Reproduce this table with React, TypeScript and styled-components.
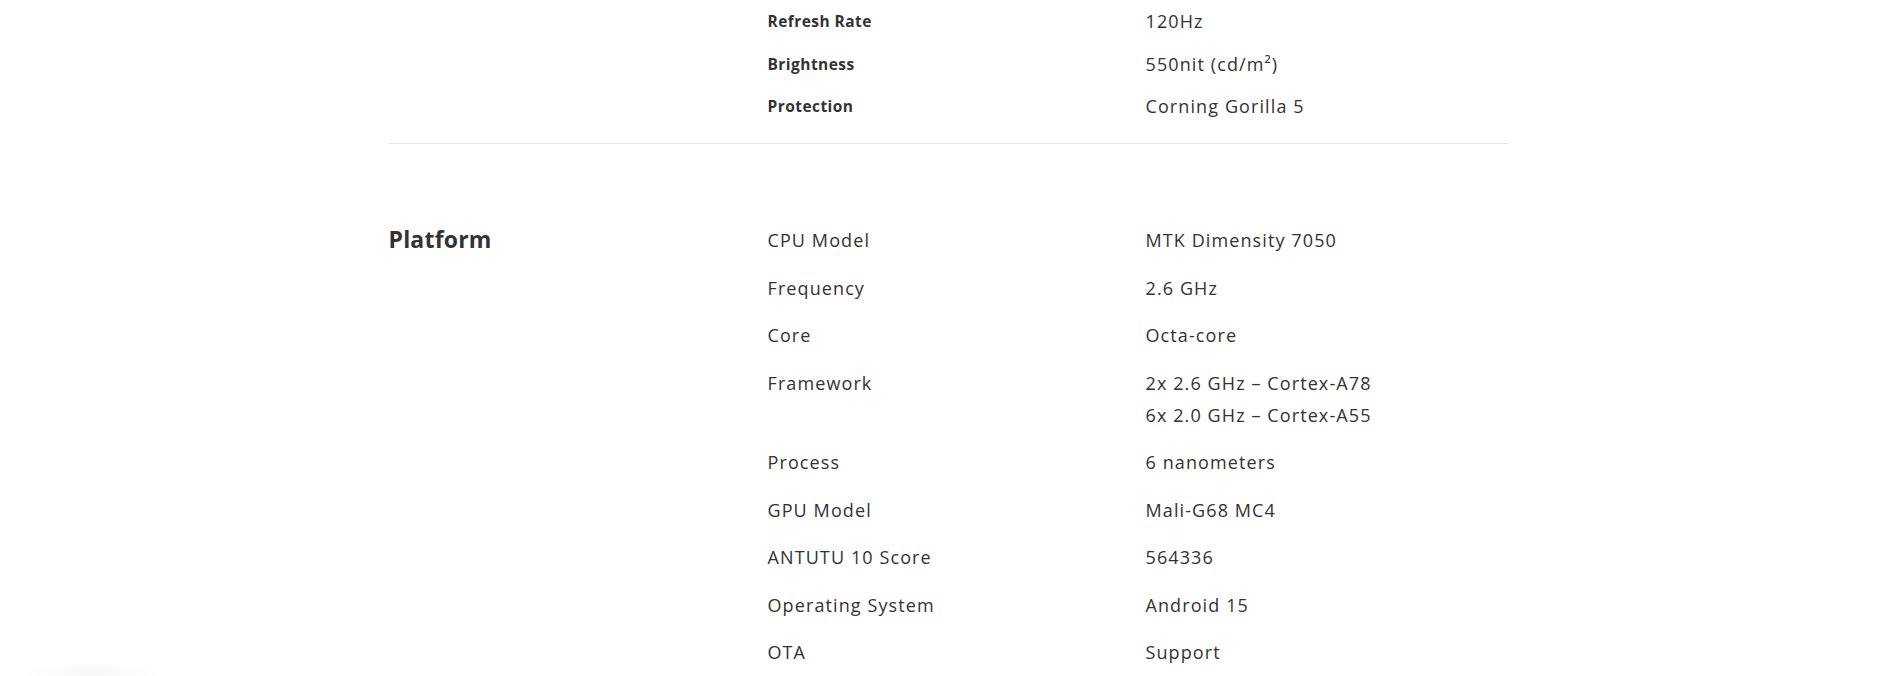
import React from "react";
import styled, { createGlobalStyle } from "styled-components";

const GlobalStyle = createGlobalStyle`
  html, body {
    margin: 0;
    padding: 0;
    background: #ffffff;
  }
  body {
    font-family: "Open Sans", "Liberation Sans", sans-serif;
    color: #333333;
    overflow: hidden;
  }
`;

const Page = styled.main`
  width: 1120px;
  margin: 0 auto;
`;

const Section = styled.section<{ $divided?: boolean; $padTop: number; $padBottom: number }>`
  display: grid;
  grid-template-columns: 379px 1fr;
  padding-top: ${(p) => p.$padTop}px;
  padding-bottom: ${(p) => p.$padBottom}px;
  border-bottom: ${(p) => (p.$divided ? "1px solid #e6e6e6" : "none")};
`;

const SectionTitle = styled.h2`
  margin: 0;
  padding-top: 8px;
  font-family: "Open Sans", "Liberation Sans", sans-serif;
  font-size: 23px;
  font-weight: 700;
  line-height: 29px;
  letter-spacing: 0.2px;
  color: #333333;
`;

const SpecList = styled.dl`
  margin: 0;
  display: flex;
  flex-direction: column;
`;

const SpecRow = styled.div<{ $compact?: boolean }>`
  display: grid;
  grid-template-columns: 378px 1fr;
  padding: ${(p) => (p.$compact ? "7px 0" : "7.75px 0")};
`;

const Label = styled.dt<{ $strong?: boolean }>`
  margin: 0;
  font-size: ${(p) => (p.$strong ? "15.5px" : "18px")};
  font-weight: ${(p) => (p.$strong ? 700 : 400)};
  line-height: ${(p) => (p.$strong ? "28.5px" : "32px")};
  letter-spacing: ${(p) => (p.$strong ? "0.45px" : "1.1px")};
  color: #333333;
`;

const Value = styled.dd<{ $compact?: boolean }>`
  margin: 0;
  font-size: 18px;
  font-weight: 400;
  line-height: ${(p) => (p.$compact ? "28.5px" : "32px")};
  letter-spacing: 1.1px;
  color: #333333;
`;

const ValueLine = styled.span`
  display: block;
`;

const FloatShadow = styled.div`
  position: fixed;
  left: 22px;
  bottom: -8px;
  width: 140px;
  height: 22px;
  border-radius: 50%;
  background: radial-gradient(ellipse at center, rgba(0, 0, 0, 0.03) 0%, rgba(0, 0, 0, 0) 70%);
  pointer-events: none;
`;

type Spec = { label: string; value: string[] };

const display: Spec[] = [
  { label: "Refresh Rate", value: ["120Hz"] },
  { label: "Brightness", value: ["550nit (cd/m²)"] },
  { label: "Protection", value: ["Corning Gorilla 5"] },
];

const platform: Spec[] = [
  { label: "CPU Model", value: ["MTK Dimensity 7050"] },
  { label: "Frequency", value: ["2.6 GHz"] },
  { label: "Core", value: ["Octa-core"] },
  { label: "Framework", value: ["2x 2.6 GHz – Cortex-A78", "6x 2.0 GHz – Cortex-A55"] },
  { label: "Process", value: ["6 nanometers"] },
  { label: "GPU Model", value: ["Mali-G68 MC4"] },
  { label: "ANTUTU 10 Score", value: ["564336"] },
  { label: "Operating System", value: ["Android 15"] },
  { label: "OTA", value: ["Support"] },
];

export default function App() {
  return (
    <>
      <GlobalStyle />
      <Page>
        <Section $divided $padTop={0} $padBottom={15}>
          <div />
          <SpecList>
            {display.map((s) => (
              <SpecRow key={s.label} $compact>
                <Label $strong>{s.label}</Label>
                <Value $compact>
                  {s.value.map((v) => (
                    <ValueLine key={v}>{v}</ValueLine>
                  ))}
                </Value>
              </SpecRow>
            ))}
          </SpecList>
        </Section>
        <Section $padTop={73} $padBottom={40}>
          <SectionTitle>Platform</SectionTitle>
          <SpecList>
            {platform.map((s) => (
              <SpecRow key={s.label}>
                <Label>{s.label}</Label>
                <Value>
                  {s.value.map((v) => (
                    <ValueLine key={v}>{v}</ValueLine>
                  ))}
                </Value>
              </SpecRow>
            ))}
          </SpecList>
        </Section>
      </Page>
      <FloatShadow />
    </>
  );
}
